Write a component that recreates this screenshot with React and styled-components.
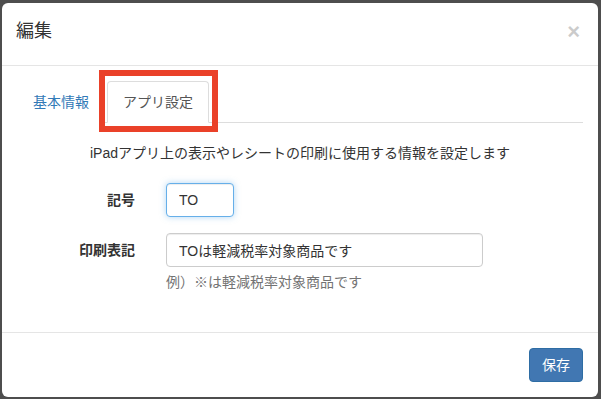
import React from 'react';
import styled, { createGlobalStyle } from 'styled-components';

const GlobalStyle = createGlobalStyle`
  html, body {
    margin: 0;
    padding: 0;
    background: #4e4e4e;
  }
  body {
    font-family: "Liberation Sans", "Noto Sans CJK JP", sans-serif;
    font-size: 14px;
    color: #333;
  }
`;

const App = () => {
  return (
    <>
      <GlobalStyle />
      <Backdrop>
        <Modal>
          <Header>
            <Title>編集</Title>
            <Close>×</Close>
          </Header>
          <Body>
            <Tabs>
              <Tab>基本情報</Tab>
              <Tab active>
                アプリ設定
                <Highlight />
              </Tab>
            </Tabs>
            <Lead>iPadアプリ上の表示やレシートの印刷に使用する情報を設定します</Lead>
            <Form>
              <Label>記号</Label>
              <Input width="68px" focused defaultValue="TO" />
              <Label>印刷表記</Label>
              <div>
                <Input width="317px" defaultValue="TOは軽減税率対象商品です" />
                <Help>例）※は軽減税率対象商品です</Help>
              </div>
            </Form>
          </Body>
          <Footer>
            <Button>保存</Button>
          </Footer>
        </Modal>
      </Backdrop>
    </>
  );
};

export default App;

const Backdrop = styled.div`
  width: 601px;
  height: 399px;
  padding: 3px 3px 2px 2px;
  box-sizing: border-box;
`;

const Modal = styled.div`
  background: #fff;
  border-radius: 6px;
  height: 100%;
  display: flex;
  flex-direction: column;
  overflow: hidden;
`;

const Header = styled.div`
  display: flex;
  align-items: center;
  justify-content: space-between;
  padding: 15px 15px 20px 14px;
  border-bottom: 1px solid #e5e5e5;
`;

const Title = styled.h4`
  margin: 0;
  font-size: 18px;
  font-weight: 400;
  line-height: 27px;
  color: #333;
`;

const Close = styled.span`
  font-family: "Liberation Sans", sans-serif;
  font-size: 22px;
  font-weight: 700;
  line-height: 1;
  color: #000;
  opacity: 0.2;
  margin-right: 3px;
`;

const Body = styled.div`
  flex: 1;
  padding: 15px 15px 0 15px;
`;

const Tabs = styled.div`
  display: flex;
  border-bottom: 1px solid #ddd;
  padding: 0;
`;

const Tab = styled.div`
  position: relative;
  padding: 10px 15px;
  line-height: 20px;
  margin-right: 2px;
  margin-bottom: -1px;
  border: 1px solid ${p => (p.active ? '#ddd' : 'transparent')};
  border-bottom-color: ${p => (p.active ? '#fff' : 'transparent')};
  border-radius: 4px 4px 0 0;
  background: #fff;
  color: ${p => (p.active ? '#555' : '#337ab7')};
`;

const Highlight = styled.span`
  position: absolute;
  left: -9px;
  right: -10px;
  top: -12px;
  bottom: -10px;
  border: 6px solid #ea4129;
  pointer-events: none;
`;

const Lead = styled.p`
  margin: 20px 0 20px;
  text-align: center;
  line-height: 20px;
`;

const Form = styled.div`
  display: grid;
  grid-template-columns: 118px 1fr;
  column-gap: 31px;
  row-gap: 16px;
  align-items: start;
`;

const Label = styled.label`
  text-align: right;
  font-weight: 700;
  line-height: 20px;
  padding-top: 7px;
`;

const Input = styled.input`
  box-sizing: border-box;
  width: ${p => p.width};
  height: 34px;
  padding: 6px 12px;
  font-family: "Liberation Sans", "Noto Sans CJK JP", sans-serif;
  font-size: 14px;
  color: #333;
  border: 1px solid ${p => (p.focused ? '#66afe9' : '#ccc')};
  border-radius: 4px;
  box-shadow: inset 0 1px 1px rgba(0, 0, 0, 0.075)
    ${p => (p.focused ? ', 0 0 6px rgba(102, 175, 233, 0.5)' : '')};
  outline: none;
  display: block;
`;

const Help = styled.div`
  margin-top: 5px;
  line-height: 20px;
  color: #737373;
`;

const Footer = styled.div`
  display: flex;
  justify-content: flex-end;
  padding: 15px;
  border-top: 1px solid #e5e5e5;
`;

const Button = styled.button`
  font-family: "Liberation Sans", "Noto Sans CJK JP", sans-serif;
  font-size: 14px;
  line-height: 20px;
  padding: 6px 12px;
  color: #fff;
  background: #4177b2;
  border: 1px solid #2e6da4;
  border-radius: 4px;
`;
